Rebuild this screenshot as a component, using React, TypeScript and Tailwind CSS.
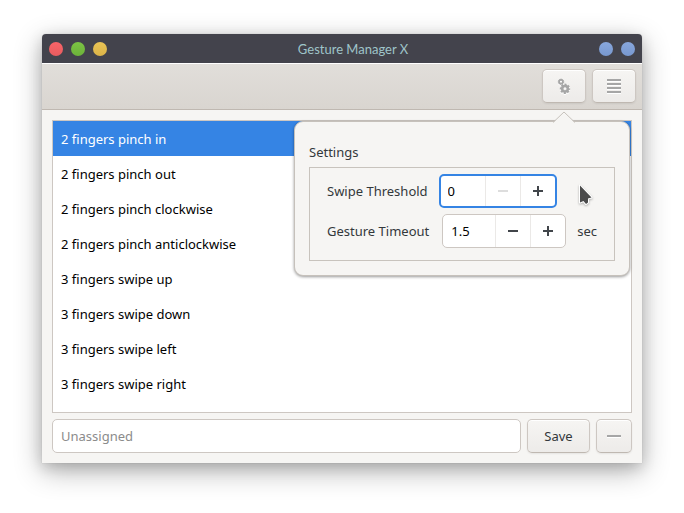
import { useState } from "react";

const gestures = [
  "2 fingers pinch in",
  "2 fingers pinch out",
  "2 fingers pinch clockwise",
  "2 fingers pinch anticlockwise",
  "3 fingers swipe up",
  "3 fingers swipe down",
  "3 fingers swipe left",
  "3 fingers swipe right",
];

const raised =
  "flex h-[34px] items-center justify-center rounded-[5px] border border-[#cdc7c2] border-b-[#bfb8b1] bg-linear-to-b from-[#f6f5f3] to-[#edebe9] shadow-[inset_0_1px_0_#ffffff,0_1px_2px_rgba(0,0,0,0.07)]";

function Gears({ stroke }: { stroke: string }) {
  return (
    <g stroke={stroke}>
      <circle cx="5" cy="3.8" r="1.9" strokeWidth="1.7" />
      <circle cx="5" cy="3.8" r="2.7" strokeWidth="1" strokeDasharray="1.3 0.82" />
      <circle cx="9" cy="10.8" r="2.8" strokeWidth="2.6" />
      <circle cx="9" cy="10.8" r="4.3" strokeWidth="1.8" strokeDasharray="2 1.377" strokeDashoffset="1" />
    </g>
  );
}

function GearsIcon() {
  return (
    <svg width="16" height="18" viewBox="0 -1 16 18" fill="none" aria-hidden="true">
      <g transform="translate(0 1)">
        <Gears stroke="#ffffff" />
      </g>
      <Gears stroke="#a6a6a6" />
    </svg>
  );
}

function MenuIcon() {
  return (
    <svg width="14" height="16" viewBox="0 0 14 16" shapeRendering="crispEdges" aria-hidden="true">
      <path d="M0 3h14v1H0zM0 7h14v1H0zM0 11h14v1H0zM0 15h14v1H0z" fill="#ffffff" />
      <path d="M0 1h14v2H0zM0 5h14v2H0zM0 9h14v2H0zM0 13h14v2H0z" fill="#a6a6a6" />
    </svg>
  );
}

function StepIcon({ plus }: { plus?: boolean }) {
  return (
    <svg width="10" height="10" viewBox="0 0 10 10" fill="currentColor" shapeRendering="crispEdges" aria-hidden="true">
      <path d={plus ? "M0 4h4V0h2v4h4v2H6v4H4V6H0z" : "M0 4h10v2H0z"} />
    </svg>
  );
}

type SpinProps = {
  id: string;
  value: string;
  onChange: (value: string) => void;
  step: number;
  active?: boolean;
};

function Spin({ id, value, onChange, step, active }: SpinProps) {
  const number = Number(value) || 0;
  const move = (by: number) => onChange(String(Math.round((number + by) * 10) / 10));
  const stepper = "flex w-[35px] items-center justify-center border-l border-[#ebe9e7] text-[#41454a] disabled:text-[#dddddd]";
  return (
    <div
      className={`flex h-[34px] overflow-hidden rounded-[5px] bg-white ${
        active ? "w-[118px] border-2 border-[#3584e4]" : "w-[124px] border border-[#cdc7c2]"
      }`}
    >
      <input
        id={id}
        value={value}
        onChange={(e) => onChange(e.target.value)}
        inputMode="decimal"
        className={`min-w-0 flex-1 bg-transparent pt-0.5 text-black outline-none ${active ? "pl-[7px]" : "pl-2"}`}
      />
      <button type="button" aria-label="Decrease" disabled={number <= 0} onClick={() => move(-step)} className={stepper}>
        <StepIcon />
      </button>
      <button type="button" aria-label="Increase" onClick={() => move(step)} className={stepper}>
        <StepIcon plus />
      </button>
    </div>
  );
}

function SettingsPopover() {
  const [threshold, setThreshold] = useState("0");
  const [timeout, setTimeoutValue] = useState("1.5");
  return (
    <section
      aria-label="Settings"
      className="absolute top-[87px] right-3 w-[336px] rounded-[9px] border border-[#c6c1bb] bg-[#f6f5f3] px-3.5 pt-5 pb-3.5 shadow-[0_1px_3px_rgba(0,0,0,0.4)]"
    >
      <svg className="absolute -top-[11px] right-[54px]" width="22" height="12" viewBox="0 0 22 12" aria-hidden="true">
        <path d="M0 12 L11 1 L22 12z" fill="#f6f5f3" />
        <path d="M0 11.5 L11 1 L22 11.5" fill="none" stroke="#c6c1bb" />
      </svg>
      <h2 className="leading-5">Settings</h2>
      <div className="mt-[5px] flex flex-col gap-1.5 border border-[#c8c3bd] pt-1.5 pb-3 pl-[17px]">
        <div className="flex items-center gap-[11px]">
          <label htmlFor="threshold" className="pt-0.5">Swipe Threshold</label>
          <Spin id="threshold" value={threshold} onChange={setThreshold} step={1} active />
        </div>
        <div className="flex items-center gap-[11px]">
          <label htmlFor="timeout" className="pt-0.5 pr-0.5">Gesture Timeout</label>
          <Spin id="timeout" value={timeout} onChange={setTimeoutValue} step={0.1} />
          <span className="pt-0.5">sec</span>
        </div>
      </div>
      <svg
        className="pointer-events-none absolute top-[61px] right-[34px] drop-shadow-[0_1px_1px_rgba(0,0,0,0.3)]"
        width="18"
        height="24"
        viewBox="0 0 18 24"
        aria-hidden="true"
      >
        <path
          d="M3 2.5 L14.5 14.5 L11 15.5 L11 19.5 L9 21 L6.5 18 L3 19.5z"
          fill="#4b4b4b"
          stroke="#ffffff"
          strokeWidth="2"
          strokeLinejoin="round"
          paintOrder="stroke"
        />
      </svg>
    </section>
  );
}

export default function App() {
  const [selected, setSelected] = useState(0);
  const dot = "size-3.5 rounded-full";
  return (
    <main className="bg-white px-[42px] pt-[34px] pb-[50px] font-['Noto_Sans',sans-serif] text-[13px] text-[#33383b]">
      <div className="relative rounded-t-[4px] bg-[#f6f5f3] shadow-[0_0_1px_rgba(0,0,0,0.25),0_8px_28px_rgba(0,0,0,0.3),0_4px_14px_rgba(0,0,0,0.15)]">
        <header className="flex h-[29px] items-center justify-between rounded-t-[4px] bg-[#43434c] px-[7px]">
          <div className="flex flex-1 gap-2">
            <button type="button" aria-label="Close" className={`${dot} bg-linear-to-b from-[#fa6468] to-[#e85c5f]`} />
            <button type="button" aria-label="Maximize" className={`${dot} bg-linear-to-b from-[#7cc444] to-[#6cb23a]`} />
            <button type="button" aria-label="Minimize" className={`${dot} bg-linear-to-b from-[#e9c455] to-[#dbb348]`} />
          </div>
          <h1 className="pl-[22px] font-['Lato',sans-serif] text-[13px] leading-5 text-[#9fc4c9]">Gesture Manager X</h1>
          <div className="flex flex-1 justify-end gap-2">
            <button type="button" aria-label="Shade" className={`${dot} bg-linear-to-b from-[#88a7dd] to-[#7898cf]`} />
            <button type="button" aria-label="Keep above" className={`${dot} bg-linear-to-b from-[#88a7dd] to-[#7898cf]`} />
          </div>
        </header>

        <nav className="flex h-[47px] items-center justify-end gap-1.5 border-t border-b border-t-white border-b-[#bfb8b1] bg-linear-to-b from-[#e1deda] to-[#d9d5d0] px-1.5 pb-px">
          <button type="button" aria-label="Settings" aria-expanded="true" className={`${raised} w-11`}>
            <GearsIcon />
          </button>
          <button type="button" aria-label="Menu" className={`${raised} w-11`}>
            <MenuIcon />
          </button>
        </nav>

        <div className="flex flex-col gap-1.5 p-2.5">
          <ul className="border border-[#cdc7c2] bg-white pb-[11px]">
            {gestures.map((name, i) => (
              <li key={name}>
                <button
                  type="button"
                  aria-pressed={i === selected}
                  onClick={() => setSelected(i)}
                  className={`block h-[35px] w-full px-2 pt-0.5 text-left ${
                    i === selected ? "bg-[#3584e4] text-white" : "text-black"
                  }`}
                >
                  {name}
                </button>
              </li>
            ))}
          </ul>
          <form className="flex gap-1.5" onSubmit={(e) => e.preventDefault()}>
            <input
              aria-label="Command"
              placeholder="Unassigned"
              className="h-[34px] min-w-0 flex-1 rounded-[5px] border border-[#cdc7c2] bg-white px-2 outline-none placeholder:text-[#8b8b8b]"
            />
            <button type="submit" className={`${raised} w-[63px] pt-0.5`}>
              Save
            </button>
            <button type="button" aria-label="Remove" className={`${raised} w-9`}>
              <svg width="14" height="3" viewBox="0 0 14 3" shapeRendering="crispEdges" aria-hidden="true">
                <path d="M0 0h14v2H0z" fill="#a6a6a6" />
                <path d="M0 2h14v1H0z" fill="#ffffff" />
              </svg>
            </button>
          </form>
        </div>

        <SettingsPopover />
      </div>
    </main>
  );
}
